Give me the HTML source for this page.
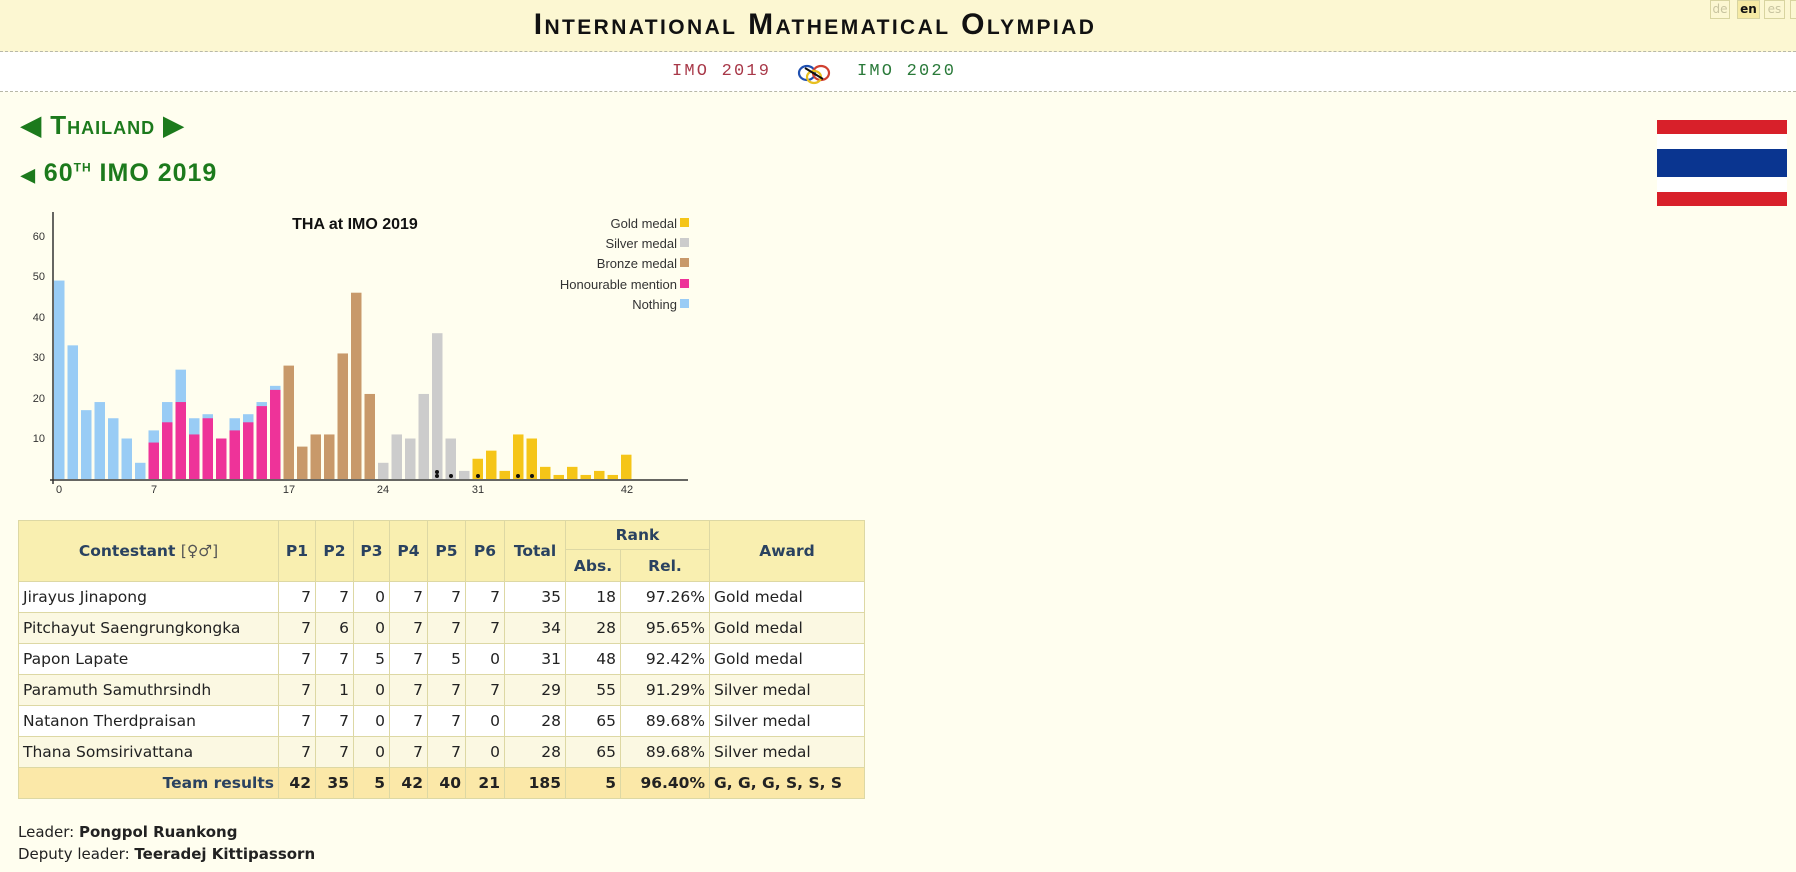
<!DOCTYPE html>
<html><head><meta charset="utf-8"><style>
body{margin:0;width:1796px;height:872px;background:#fffeef;font-family:"DejaVu Sans","Liberation Sans",sans-serif;position:relative;overflow:hidden}
.hdr{position:absolute;left:0;top:0;width:1796px;height:51px;background:#fcf7d2;border-bottom:1px dashed #b8b8a8}
.nav{position:absolute;left:0;top:52px;width:1796px;height:39px;background:#fff;border-bottom:1px dashed #b8b8a8}
.title{position:absolute;left:500px;top:8px;width:630px;text-align:center;font-family:"Liberation Sans",sans-serif;font-weight:bold;font-size:30px;font-variant:small-caps;letter-spacing:2.4px;color:#111}
.lang{position:absolute;top:0;height:17px;border:1px solid #d8d4a0;font-size:12px;color:#c8c4a0;line-height:17px;text-align:center;font-family:"DejaVu Sans",sans-serif}
.nl{position:absolute;top:62px;font-family:"Liberation Mono",monospace;font-size:17px;letter-spacing:2.2px}
.g{position:absolute;color:#1c7a1c;font-family:"Liberation Sans",sans-serif;font-weight:bold}
table{position:absolute;left:18px;top:520px;border-collapse:collapse;font-size:15.5px;color:#222}
td,th{border:1.5px solid #ddd8a4;padding:0 4px;height:30px;white-space:nowrap}
th{background:#f9efb0;color:#2a4260;font-weight:bold}
td.n{text-align:right}
tr.a td{background:#fff}
tr.b td{background:#fbf8e2}
tr.t td{background:#fbe8a8;font-weight:bold;color:#222}
.ld{position:absolute;left:18px;font-size:15px;color:#222}
</style></head><body>
<div class="hdr"></div>
<div class="title">International Mathematical Olympiad</div>
<div class="lang" style="left:1710px;width:18px">de</div>
<div class="lang" style="left:1737px;width:21px;background:#f6eaa4;color:#111;font-weight:bold">en</div>
<div class="lang" style="left:1764px;width:19px">es</div>
<div class="lang" style="left:1790px;width:10px"></div>
<div class="nav"></div>
<div class="nl" style="left:672px;color:#a83848">IMO 2019</div>
<svg style="position:absolute;left:797px;top:62px" width="36" height="24" viewBox="0 0 36 24">
<ellipse cx="10" cy="11" rx="8" ry="7" fill="none" stroke="#2050b0" stroke-width="2.2"/>
<ellipse cx="24" cy="11" rx="8" ry="7" fill="none" stroke="#d04030" stroke-width="2.2"/>
<ellipse cx="17" cy="15" rx="7" ry="6" fill="none" stroke="#e8c020" stroke-width="2.2"/>
<path d="M8 6 L26 17" stroke="#111" stroke-width="2"/>
</svg>
<div class="nl" style="left:857px;color:#2a7a3a">IMO 2020</div>
<div class="g" style="left:21px;top:110px;font-size:26px;font-variant:small-caps;letter-spacing:1px">◀ Thailand ▶</div>
<div class="g" style="left:21px;top:159px;font-size:25px;letter-spacing:1px"><span style="font-size:18px">◀</span> 60<sup style="font-size:12px">TH</sup> IMO 2019</div>
<svg style="position:absolute;left:1657px;top:120px" width="130" height="86">
<rect width="130" height="86" fill="#fff"/><rect width="130" height="14" fill="#d8202a"/><rect y="72" width="130" height="14" fill="#d8202a"/><rect y="29" width="130" height="28" fill="#0a3590"/></svg>
<svg style="position:absolute;left:0;top:200px" width="700" height="300" font-family="Liberation Sans,sans-serif">
<g transform="translate(0,279) scale(1,-4.05)">
<g fill="#99ccf5">
<rect x="54" y="0" width="10.5" height="49"/><rect x="67.5" y="0" width="10.5" height="33"/><rect x="81" y="0" width="10.5" height="17"/><rect x="94.5" y="0" width="10.5" height="19"/><rect x="108" y="0" width="10.5" height="15"/><rect x="121.5" y="0" width="10.5" height="10"/><rect x="135" y="0" width="10.5" height="4"/>
<rect x="148.5" y="0" width="10.5" height="12"/><rect x="162" y="0" width="10.5" height="19"/><rect x="175.5" y="0" width="10.5" height="27"/><rect x="189" y="0" width="10.5" height="15"/><rect x="202.5" y="0" width="10.5" height="16"/><rect x="229.5" y="0" width="10.5" height="15"/><rect x="243" y="0" width="10.5" height="16"/><rect x="256.5" y="0" width="10.5" height="19"/><rect x="270" y="0" width="10.5" height="23"/>
</g>
<g fill="#ee3399">
<rect x="148.5" y="0" width="10.5" height="9"/><rect x="162" y="0" width="10.5" height="14"/><rect x="175.5" y="0" width="10.5" height="19"/><rect x="189" y="0" width="10.5" height="11"/><rect x="202.5" y="0" width="10.5" height="15"/><rect x="216" y="0" width="10.5" height="10"/><rect x="229.5" y="0" width="10.5" height="12"/><rect x="243" y="0" width="10.5" height="14"/><rect x="256.5" y="0" width="10.5" height="18"/><rect x="270" y="0" width="10.5" height="22"/>
</g>
<g fill="#c8996a">
<rect x="283.5" y="0" width="10.5" height="28"/><rect x="297" y="0" width="10.5" height="8"/><rect x="310.5" y="0" width="10.5" height="11"/><rect x="324" y="0" width="10.5" height="11"/><rect x="337.5" y="0" width="10.5" height="31"/><rect x="351" y="0" width="10.5" height="46"/><rect x="364.5" y="0" width="10.5" height="21"/>
</g>
<g fill="#cccccc">
<rect x="378" y="0" width="10.5" height="4"/><rect x="391.5" y="0" width="10.5" height="11"/><rect x="405" y="0" width="10.5" height="10"/><rect x="418.5" y="0" width="10.5" height="21"/><rect x="432" y="0" width="10.5" height="36"/><rect x="445.5" y="0" width="10.5" height="10"/><rect x="459" y="0" width="10.5" height="2"/>
</g>
<g fill="#f5c518">
<rect x="472.5" y="0" width="10.5" height="5"/><rect x="486" y="0" width="10.5" height="7"/><rect x="499.5" y="0" width="10.5" height="2"/><rect x="513" y="0" width="10.5" height="11"/><rect x="526.5" y="0" width="10.5" height="10"/><rect x="540" y="0" width="10.5" height="3"/><rect x="553.5" y="0" width="10.5" height="1"/><rect x="567" y="0" width="10.5" height="3"/><rect x="580.5" y="0" width="10.5" height="1"/><rect x="594" y="0" width="10.5" height="2"/><rect x="607.5" y="0" width="10.5" height="1"/><rect x="621" y="0" width="10.5" height="6"/>
</g>
</g>
<g fill="#111"><circle cx="437" cy="272" r="2"/><circle cx="437" cy="276" r="2"/><circle cx="451" cy="276" r="2"/><circle cx="478" cy="276" r="2"/><circle cx="518" cy="276" r="2"/><circle cx="532" cy="276" r="2"/></g>
<line x1="53" y1="12" x2="53" y2="284" stroke="#333" stroke-width="1.5"/>
<line x1="50" y1="280" x2="688" y2="280" stroke="#333" stroke-width="1.5"/>
<g font-size="11" fill="#333" text-anchor="end">
<text x="45" y="40">60</text><text x="45" y="80">50</text><text x="45" y="121">40</text><text x="45" y="161">30</text><text x="45" y="202">20</text><text x="45" y="242">10</text></g>
<g font-size="11" fill="#333" text-anchor="middle">
<text x="59" y="293">0</text><text x="154" y="293">7</text><text x="289" y="293">17</text><text x="383" y="293">24</text><text x="478" y="293">31</text><text x="627" y="293">42</text></g>
<text x="355" y="29" font-size="16" font-weight="bold" text-anchor="middle" fill="#111">THA at IMO 2019</text>
<g font-size="13" fill="#333" text-anchor="end">
<text x="677" y="28">Gold medal</text><text x="677" y="48">Silver medal</text><text x="677" y="68">Bronze medal</text><text x="677" y="89">Honourable mention</text><text x="677" y="109">Nothing</text></g>
<rect x="680" y="18" width="9" height="9" fill="#f5c518"/><rect x="680" y="38" width="9" height="9" fill="#ccc"/><rect x="680" y="58" width="9" height="9" fill="#c8996a"/><rect x="680" y="79" width="9" height="9" fill="#ee3399"/><rect x="680" y="99" width="9" height="9" fill="#99ccf5"/>
</svg>
<table>
<colgroup><col style="width:260px"><col style="width:37px"><col style="width:38px"><col style="width:36px"><col style="width:38px"><col style="width:38px"><col style="width:39px"><col style="width:61px"><col style="width:55px"><col style="width:89px"><col style="width:155px"></colgroup>
<tr><th rowspan="2" style="height:60px">Contestant <span style="font-weight:normal;color:#555">[♀♂]</span></th><th rowspan="2">P1</th><th rowspan="2">P2</th><th rowspan="2">P3</th><th rowspan="2">P4</th><th rowspan="2">P5</th><th rowspan="2">P6</th><th rowspan="2">Total</th><th colspan="2" style="height:28px">Rank</th><th rowspan="2">Award</th></tr>
<tr><th style="height:29px">Abs.</th><th>Rel.</th></tr>
<tr class="a"><td>Jirayus Jinapong</td><td class="n">7</td><td class="n">7</td><td class="n">0</td><td class="n">7</td><td class="n">7</td><td class="n">7</td><td class="n">35</td><td class="n">18</td><td class="n">97.26%</td><td>Gold medal</td></tr>
<tr class="b"><td>Pitchayut Saengrungkongka</td><td class="n">7</td><td class="n">6</td><td class="n">0</td><td class="n">7</td><td class="n">7</td><td class="n">7</td><td class="n">34</td><td class="n">28</td><td class="n">95.65%</td><td>Gold medal</td></tr>
<tr class="a"><td>Papon Lapate</td><td class="n">7</td><td class="n">7</td><td class="n">5</td><td class="n">7</td><td class="n">5</td><td class="n">0</td><td class="n">31</td><td class="n">48</td><td class="n">92.42%</td><td>Gold medal</td></tr>
<tr class="b"><td>Paramuth Samuthrsindh</td><td class="n">7</td><td class="n">1</td><td class="n">0</td><td class="n">7</td><td class="n">7</td><td class="n">7</td><td class="n">29</td><td class="n">55</td><td class="n">91.29%</td><td>Silver medal</td></tr>
<tr class="a"><td>Natanon Therdpraisan</td><td class="n">7</td><td class="n">7</td><td class="n">0</td><td class="n">7</td><td class="n">7</td><td class="n">0</td><td class="n">28</td><td class="n">65</td><td class="n">89.68%</td><td>Silver medal</td></tr>
<tr class="b"><td>Thana Somsirivattana</td><td class="n">7</td><td class="n">7</td><td class="n">0</td><td class="n">7</td><td class="n">7</td><td class="n">0</td><td class="n">28</td><td class="n">65</td><td class="n">89.68%</td><td>Silver medal</td></tr>
<tr class="t"><td class="n" style="color:#2a4260">Team results</td><td class="n">42</td><td class="n">35</td><td class="n">5</td><td class="n">42</td><td class="n">40</td><td class="n">21</td><td class="n">185</td><td class="n">5</td><td class="n">96.40%</td><td>G, G, G, S, S, S</td></tr>
</table>
<div class="ld" style="top:823px">Leader: <b>Pongpol Ruankong</b></div>
<div class="ld" style="top:845px">Deputy leader: <b>Teeradej Kittipassorn</b></div>
</body></html>
